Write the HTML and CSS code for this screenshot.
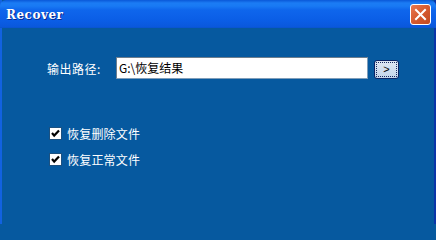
FILE: index.html
```html
<!DOCTYPE html>
<html>
<head>
<meta charset="utf-8">
<link rel="stylesheet" href="styles.css">
</head>
<body>
<div class="window">
  <div class="titlebar">
    <span class="title">Recover</span>
    <span class="close">
      <svg width="13" height="13" viewBox="0 0 13 13"><path d="M2 2 L11 11 M11 2 L2 11" stroke="#fff" stroke-width="2" stroke-linecap="square"/></svg>
    </span>
  </div>
  <div class="content">
    <div class="path-row">
      <span class="label">输出路径:</span>
      <div class="input">G:\恢复结果</div>
      <span class="browse"><span class="browse-inner">&gt;</span></span>
    </div>
    <div class="checks">
      <div class="check-row">
        <span class="box"><svg width="11" height="11" viewBox="0 0 11 11"><path d="M2 5 L4.2 7.6 L9 2.6" fill="none" stroke="#000" stroke-width="2.2"/></svg></span>
        <span class="check-label">恢复删除文件</span>
      </div>
      <div class="check-row">
        <span class="box"><svg width="11" height="11" viewBox="0 0 11 11"><path d="M2 5 L4.2 7.6 L9 2.6" fill="none" stroke="#000" stroke-width="2.2"/></svg></span>
        <span class="check-label">恢复正常文件</span>
      </div>
    </div>
  </div>
</div>
</body>
</html>
```

FILE: styles.css
```css
html, body {
  margin: 0;
  padding: 0;
  background: #06599f;
  overflow: hidden;
}
.window {
  width: 436px;
  height: 224px;
  box-sizing: border-box;
  background: #06599f;
  border-left: 2px solid #1262e0;
  border-right: 2px solid #0a35a8;
  display: flex;
  flex-direction: column;
  font-family: "Noto Sans CJK SC", "Noto Sans", sans-serif;
  font-size: 12px;
  color: #fff;
}
.titlebar {
  height: 28px;
  margin: 0 -2px;
  display: flex;
  align-items: center;
  justify-content: space-between;
  padding: 0 5px 0 6px;
  background: linear-gradient(to bottom, #0a58d8 0px, #1b7cf4 3px, #197af4 6px, #0f66ec 10px, #0b5ee6 20px, #0a58dc 27px, #0a52c8 28px);
  border-radius: 6px 6px 0 0;
}
.title {
  font-family: "DejaVu Serif", "Liberation Serif", serif;
  font-weight: bold;
  font-size: 12px;
  letter-spacing: 0.5px;
  color: #fff;
  text-shadow: 1px 1px 0 #0a2a90;
  margin-top: 1px;
}
.close {
  width: 19px;
  height: 19px;
  border: 1px solid #fff;
  border-radius: 3px;
  background: linear-gradient(135deg, #e8774f 0%, #d65a2e 50%, #c24a20 100%);
  display: flex;
  align-items: center;
  justify-content: center;
  margin-top: 1px;
}
.content {
  padding: 29px 0 0 45px;
  display: flex;
  flex-direction: column;
}
.path-row {
  display: flex;
  align-items: center;
  height: 22px;
}
.label {
  width: 69px;
  letter-spacing: 0.5px;
}
.input {
  width: 252px;
  height: 22px;
  box-sizing: border-box;
  background: #fff;
  border: 1px solid #7f9db9;
  border-top-color: #6d7e8e;
  border-left-color: #6d7e8e;
  color: #000;
  padding-left: 2px;
  line-height: 19px;
}
.browse {
  margin-left: 6px;
  margin-top: 2px;
  width: 25px;
  height: 19px;
  box-sizing: border-box;
  border: 1px solid #0a2466;
  border-radius: 3px;
  background: linear-gradient(to bottom, #dfe8f4, #c3d4ea);
  padding: 1px;
  display: flex;
}
.browse-inner {
  flex: 1;
  border: 1px dotted #1a2a60;
  display: flex;
  align-items: center;
  justify-content: center;
  font-family: "Liberation Sans", sans-serif;
  font-size: 11px;
  color: #000;
}
.checks {
  margin-top: 48px;
  display: flex;
  flex-direction: column;
  gap: 13px;
  margin-left: 2px;
}
.check-row {
  display: flex;
  align-items: center;
  height: 13px;
}
.box {
  width: 13px;
  height: 13px;
  box-sizing: border-box;
  border: 1px solid #1c5180;
  background: #fff;
  display: flex;
  align-items: center;
  justify-content: center;
}
.check-label {
  margin-left: 5px;
  letter-spacing: 0.2px;
}
```
